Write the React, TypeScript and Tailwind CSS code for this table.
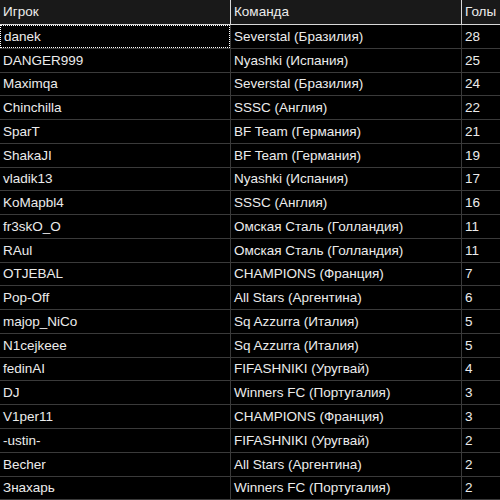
import React from 'react';

const rows: [string, string, number][] = [
  ['danek', 'Severstal (Бразилия)', 28],
  ['DANGER999', 'Nyashki (Испания)', 25],
  ['Maximqa', 'Severstal (Бразилия)', 24],
  ['Chinchilla', 'SSSC (Англия)', 22],
  ['SparT', 'BF Team (Германия)', 21],
  ['ShakaJI', 'BF Team (Германия)', 19],
  ['vladik13', 'Nyashki (Испания)', 17],
  ['KoMapbl4', 'SSSC (Англия)', 16],
  ['fr3skO_O', 'Омская Сталь (Голландия)', 11],
  ['RAul', 'Омская Сталь (Голландия)', 11],
  ['OTJEBAL', 'CHAMPIONS (Франция)', 7],
  ['Pop-Off', 'All Stars (Аргентина)', 6],
  ['majop_NiCo', 'Sq Azzurra (Италия)', 5],
  ['N1cejkeee', 'Sq Azzurra (Италия)', 5],
  ['fedinAI', 'FIFASHNIKI (Уругвай)', 4],
  ['DJ', 'Winners FC (Португалия)', 3],
  ['V1per11', 'CHAMPIONS (Франция)', 3],
  ['-ustin-', 'FIFASHNIKI (Уругвай)', 2],
  ['Becher', 'All Stars (Аргентина)', 2],
  ['Знахарь', 'Winners FC (Португалия)', 2],
];

export default function App() {
  return (
    <div className="w-[500px] h-[500px] overflow-hidden bg-black text-[#ececec] text-[13.5px] font-['Liberation_Sans',Arial,sans-serif]">
      <div className="flex h-[25px] bg-[#191919] border-b border-[#d8d8d8]">
        <div className="w-[231px] pl-[3px] pt-px flex items-center border-r border-[#d8d8d8]">Игрок</div>
        <div className="w-[231px] pl-[3px] pt-px flex items-center border-r border-[#d8d8d8]">Команда</div>
        <div className="flex-1 pl-[3px] pt-px flex items-center">Голы</div>
      </div>
      {rows.map(([player, team, goals], i) => (
        <div key={i} className="flex h-[23.78px] border-b border-[#3a3a3a]">
          <div className="w-[231px] border-r border-[#3a3a3a] flex">
            <div
              className={`flex-1 pl-[3px] pt-px flex items-center ${i === 0 ? 'border border-dotted border-white pl-[2px]' : ''}`}
            >
              {player}
            </div>
          </div>
          <div className="w-[231px] pl-[3px] pt-px flex items-center border-r border-[#3a3a3a]">{team}</div>
          <div className="flex-1 pl-[3px] pt-px flex items-center">{goals}</div>
        </div>
      ))}
    </div>
  );
}
